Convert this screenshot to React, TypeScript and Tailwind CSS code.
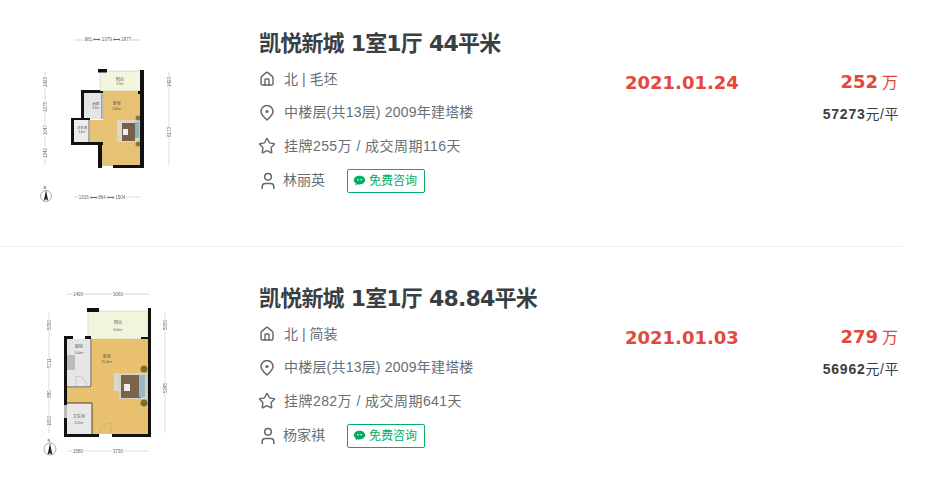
import type { ReactNode } from 'react'
import { House, Star, User } from 'lucide-react'

const Dim = ({ x, y, t, r }: { x: number; y: number; t: string; r?: boolean }) => (
	<text
		x={x}
		y={y}
		fontSize="4.5"
		fill="#666"
		stroke="#fff"
		strokeWidth="1.5"
		paintOrder="stroke"
		textAnchor="middle"
		transform={r ? `rotate(-90 ${x} ${y})` : undefined}
	>
		{t}
	</text>
)

const Label = ({ x, y, t, s = 4 }: { x: number; y: number; t: string; s?: number }) => (
	<text x={x} y={y} fontSize={s} fill="#555" textAnchor="middle">
		{t}
	</text>
)

const PlanOne = () => (
	<svg viewBox="0 0 200 200" className="w-[200px] h-[200px]">
		<g style={{ filter: 'blur(0.4px)' }}>
			<line x1="54" y1="20" x2="121" y2="20" stroke="#aaa" strokeWidth="0.5" />
			<Dim x={88} y={21} t="881 ⟷ 1379 ⟷ 2977" />
			<line x1="25" y1="52" x2="25" y2="145" stroke="#bbb" strokeWidth="0.5" />
			<Dim x={26.5} y={62} t="1423" r />
			<Dim x={26.5} y={87} t="1275" r />
			<Dim x={26.5} y={110} t="1047" r />
			<Dim x={26.5} y={133} t="1240" r />
			<line x1="149" y1="52" x2="149" y2="145" stroke="#bbb" strokeWidth="0.5" />
			<Dim x={150.5} y={62} t="1423" r />
			<Dim x={150.5} y={112} t="6173" r />
			<rect x="80" y="51" width="41" height="20" fill="#f4f5de" stroke="#999" strokeWidth="0.5" strokeDasharray="1.5 1" />
			<rect x="78" y="49" width="9" height="3.5" fill="#111" />
			<rect x="64" y="73" width="18" height="26" fill="#e4e4e4" />
			<rect x="54" y="100" width="16" height="23" fill="#ececec" />
			<path d="M83 71h37v75H82v-23H70v-23h13z" fill="#e8c274" />
			<rect x="97" y="100" width="22" height="22" fill="#ddd6c6" />
			<rect x="102" y="103" width="13" height="18" fill="#75604a" />
			<rect x="103" y="109" width="5" height="6" fill="#eee" />
			<rect x="115" y="102" width="4" height="16" fill="#8fb0bd" />
			<circle cx="118" cy="98" r="2.5" fill="#8a7a3a" />
			<circle cx="118" cy="124" r="2.5" fill="#8a7a3a" />
			<path d="M61 70h19v3H64v27h-3zM51 98h19v2H54v22h29v3H51z" fill="#111" />
			<path d="M120 50h4v98H93v-3h27zM78 125h4v23h-4zM80 71h3v2h-3zM118 71h3v3h-3z" fill="#111" />
			<path d="M69 100v22M82 73v26" stroke="#444" strokeWidth="0.8" />
			<Label x={97} y={85} t="卧室" />
			<Label x={97} y={90} t="23.8m²" s={3} />
			<Label x={100} y={61} t="阳台" />
			<Label x={100} y={65} t="3.7m²" s={3} />
			<Label x={76} y={85} t="厨房" s={3.5} />
			<Label x={76} y={89} t="3.5m²" s={2.8} />
			<Label x={62} y={109} t="卫生间" s={3.5} />
			<Label x={62} y={113} t="3.4m²" s={2.8} />
			<line x1="54" y1="177" x2="121" y2="177" stroke="#bbb" strokeWidth="0.5" />
			<Dim x={82} y={178.5} t="1316 ⟷ 864 ⟷ 1504" />
			<circle cx="26" cy="176" r="5.5" fill="none" stroke="#777" strokeWidth="0.6" />
			<path d="M26 170l2.2 11-2.2-2-2.2 2z" fill="#222" />
			<text x="25" y="169" fontSize="4" fill="#333" textAnchor="middle">N</text>
		</g>
	</svg>
)

const PlanTwo = () => (
	<svg viewBox="0 0 200 200" className="w-[200px] h-[200px]">
		<g style={{ filter: 'blur(0.4px)' }}>
			<line x1="47" y1="19" x2="129" y2="19" stroke="#aaa" strokeWidth="0.5" />
			<Dim x={58} y={20.5} t="1490" />
			<Dim x={98} y={20.5} t="3060" />
			<line x1="29" y1="37" x2="29" y2="158" stroke="#bbb" strokeWidth="0.5" />
			<Dim x={30.5} y={50} t="5050" r />
			<Dim x={30.5} y={88} t="5711" r />
			<Dim x={30.5} y={119} t="880" r />
			<Dim x={30.5} y={146} t="1600" r />
			<line x1="145" y1="37" x2="145" y2="158" stroke="#bbb" strokeWidth="0.5" />
			<Dim x={146.5} y={50} t="5050" r />
			<Dim x={146.5} y={113} t="5245" r />
			<rect x="68" y="36" width="60" height="28" fill="#f3f4dc" stroke="#c6c6b8" strokeWidth="0.5" />
			<rect x="47" y="64" width="24" height="48" fill="#e6e6e6" />
			<rect x="47" y="128" width="25" height="31" fill="#e8e8e8" />
			<path d="M72 64h56v95H72v-31H47v-15h25z" fill="#e9c06e" />
			<rect x="47" y="80" width="8" height="15" fill="#b8bcbc" />
			<rect x="94" y="98" width="6" height="18" fill="#d8d8d0" />
			<rect x="99" y="98" width="28" height="26" fill="#d8d2c4" />
			<rect x="101" y="100" width="20" height="23" fill="#7c644b" />
			<rect x="104" y="109" width="6" height="7" fill="#eee" />
			<rect x="119" y="100" width="6" height="22" fill="#98b6c4" />
			<circle cx="124" cy="94" r="3.5" fill="#7c6f33" />
			<circle cx="124" cy="128" r="3.5" fill="#7c6f33" />
			<path d="M67 33h12v4H67zM128 33h3v129H92v-3h36zM121 62h7v2h-7zM44 61h9v3h-9zM65 61h6v3h-6zM44 61h3v101h-3zM44 159h35v3H44z" fill="#111" />
			<rect x="44" y="130" width="3" height="13" fill="#bbb" />
			<path d="M47 112h24M47 128h25M72 128v31M71 64v48" stroke="#333" strokeWidth="0.9" />
			<path d="M56 112v-11a11 11 0 0 1 11 11M79 159a12 12 0 0 1 12-11v11" fill="none" stroke="#999" strokeWidth="0.4" />
			<Label x={87} y={83} t="卧室" />
			<Label x={87} y={88} t="25.4m²" s={3.6} />
			<Label x={98} y={49} t="阳台" />
			<Label x={98} y={56} t="6.6m²" s={3.6} />
			<Label x={59} y={73} t="厨房" />
			<Label x={59} y={79} t="5.0m²" s={3.6} />
			<Label x={59} y={143} t="卫生间" />
			<Label x={59} y={149} t="3.2m²" s={3.6} />
			<line x1="47" y1="176" x2="129" y2="176" stroke="#bbb" strokeWidth="0.5" />
			<Dim x={58} y={177.5} t="1580" />
			<Dim x={98} y={177.5} t="3730" />
			<circle cx="30" cy="174" r="6" fill="none" stroke="#777" strokeWidth="0.6" />
			<path d="M30 168l2.4 12-2.4-2-2.4 2z" fill="#222" />
			<text x="29" y="167" fontSize="4" fill="#333" textAnchor="middle">N</text>
		</g>
	</svg>
)

const Pin = () => (
	<svg viewBox="0 0 14 16" fill="none" stroke="#666" strokeWidth="1.5" className="w-[14px] h-[16px] ml-[1px]">
		<path d="M7 15C4 12.3 1 9.8 1 6.5a6 6 0 0 1 12 0C13 9.8 10 12.3 7 15z" />
		<circle cx="7" cy="6.5" r="1.6" fill="#666" stroke="none" />
	</svg>
)

const Row = ({
	plan,
	title,
	line1,
	line2,
	line3,
	agent,
	date,
	price,
	unit,
	last,
}: {
	plan: ReactNode
	title: string
	line1: string
	line2: string
	line3: string
	agent: string
	date: string
	price: string
	unit: string
	last?: boolean
}) => (
	<div className={`flex h-[247px] w-[902px] pt-[20px] pl-[20px] ${last ? '' : 'border-b border-[#f0f0f0] mb-[8px]'}`}>
		<div className="w-[239px] shrink-0">{plan}</div>
		<div className="w-[366px] shrink-0 pt-[8px]">
			<div className="h-[32px] leading-[32px] text-[22px] font-bold tracking-[-0.8px] text-[#394043] font-['DejaVu_Sans','Noto_Sans_CJK_SC',sans-serif]">
				{title}
			</div>
			<div className="mt-[2px] flex h-[34px] items-center text-[14px] text-[#666f75]">
				<span className="w-[25px] shrink-0">
					<House className="w-[16px] h-[16px] text-[#666]" strokeWidth={2.1} />
				</span>
				{line1}
			</div>
			<div className="flex h-[33px] items-center text-[14px] tracking-[0.2px] text-[#666f75]">
				<span className="w-[25px] shrink-0">
					<Pin />
				</span>
				{line2}
			</div>
			<div className="flex h-[34px] items-center text-[14px] tracking-[0.45px] text-[#666f75]">
				<span className="w-[25px] shrink-0 -ml-[1px]">
					<Star className="w-[18px] h-[18px] text-[#666]" strokeWidth={1.9} />
				</span>
				<span className="ml-[1px]">{line3}</span>
			</div>
			<div className="flex h-[35px] items-center text-[14px] text-[#666f75]">
				<span className="w-[24px] shrink-0 -ml-[1px]">
					<User className="w-[20px] h-[20px] text-[#666]" strokeWidth={1.8} />
				</span>
				<span className="ml-[1px]">{agent}</span>
				<span className="ml-[22px] flex h-[24px] w-[78px] items-center pl-[5px] rounded-[2px] border border-[#00ae66] text-[12px] text-[#00ae66]">
					<svg viewBox="0 0 16 16" className="w-[13px] h-[13px] mr-[3px] shrink-0">
						<path d="M8 2C4 2 1 4.4 1 7.4c0 1.7 1 3.2 2.6 4.2L3 14l2.6-1.5c.8.2 1.6.3 2.4.3 4 0 7-2.4 7-5.4S12 2 8 2z" fill="#00ae66" />
						<circle cx="6" cy="7" r="1" fill="#fff" />
						<circle cx="10" cy="7" r="1" fill="#fff" />
					</svg>
					免费咨询
				</span>
			</div>
		</div>
		<div className="w-[161px] shrink-0 pt-[50px] text-[18px] leading-[26px] font-bold text-[#e4473b] font-['DejaVu_Sans',sans-serif]">
			{date}
		</div>
		<div className="flex-1 pt-[48px] pr-[3px] text-right">
			<div className="h-[28px] leading-[28px] text-[#e4473b]">
				<span className="text-[18px] font-bold font-['DejaVu_Sans',sans-serif]">{price}</span>
				<span className="ml-[4px] mr-[1px] text-[16px]">万</span>
			</div>
			<div className="mt-[8px] text-[14px] leading-[20px] tracking-[0.5px] text-[#394043]">
				<span className="font-bold tracking-[0.8px]">{unit}</span>元/平
			</div>
		</div>
	</div>
)

const App = () => {
	return (
		<div className="h-[478px] w-[936px] overflow-hidden bg-white font-['Liberation_Sans','Noto_Sans_CJK_SC',sans-serif]">
			<Row
				plan={<PlanOne />}
				title="凯悦新城 1室1厅 44平米"
				line1="北 | 毛坯"
				line2="中楼层(共13层) 2009年建塔楼"
				line3="挂牌255万 / 成交周期116天"
				agent="林丽英"
				date="2021.01.24"
				price="252"
				unit="57273"
			/>
			<Row
				plan={<PlanTwo />}
				title="凯悦新城 1室1厅 48.84平米"
				line1="北 | 简装"
				line2="中楼层(共13层) 2009年建塔楼"
				line3="挂牌282万 / 成交周期641天"
				agent="杨家祺"
				date="2021.01.03"
				price="279"
				unit="56962"
				last
			/>
		</div>
	)
}

export default App
